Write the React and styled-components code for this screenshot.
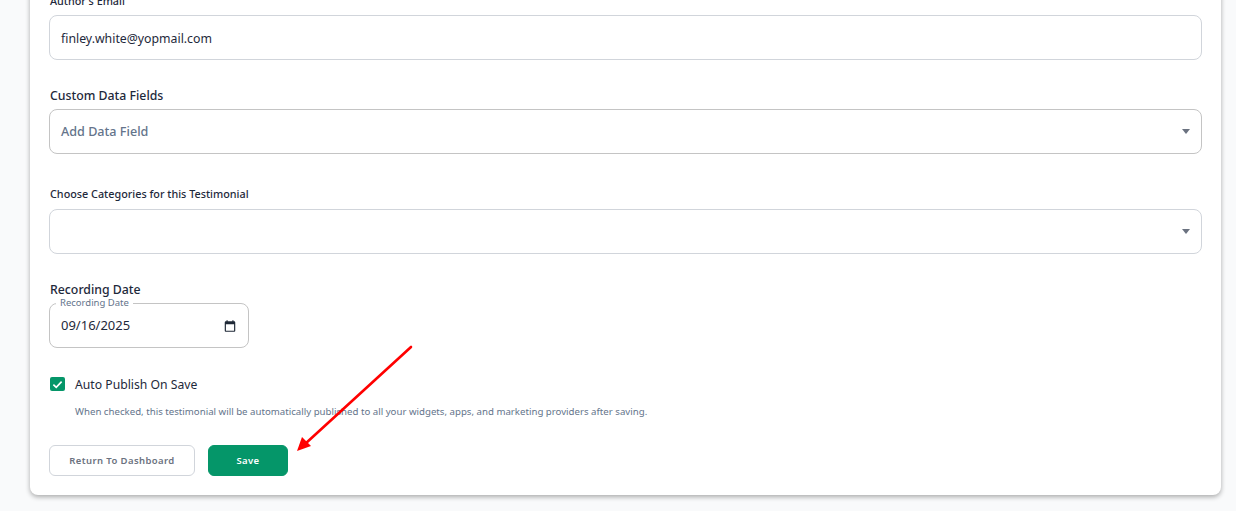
import React from "react";
import styled, { createGlobalStyle } from "styled-components";

const Global = createGlobalStyle`
  html, body { margin: 0; padding: 0; height: 511px; overflow: hidden; background: #f9fafb; }
  * { box-sizing: border-box; }
  #root { height: 511px; overflow: hidden; font-family: "Noto Sans", sans-serif; }
`;

const Page = styled.div`
  position: relative;
  height: 511px;
  padding: 0 15px 0 30px;
  overflow: hidden;
`;

const Card = styled.section`
  margin-top: -40px;
  height: 535px;
  background: #fff;
  border-radius: 8px;
  box-shadow: 0 2px 5px rgba(0, 0, 0, 0.32);
  padding: 32px 19px 0 19px;
  display: flex;
  flex-direction: column;
`;

const Label = styled.div`
  font-size: ${(p) => p.$size || 12.3}px;
  font-weight: ${(p) => p.$weight || 500};
  line-height: 18px;
  color: #1e293b;
  padding-left: 1px;
  margin-top: ${(p) => p.$top || 0}px;
  margin-bottom: ${(p) => p.$bottom || 0}px;
`;

const Field = styled.div`
  height: 45px;
  width: ${(p) => p.$width || "100%"};
  border: 1px solid ${(p) => p.$border || "#d1d5db"};
  border-radius: 8px;
  padding: ${(p) => p.$shift || "0"} 11px 0;
  display: flex;
  align-items: center;
  justify-content: space-between;
  font-size: ${(p) => p.$size || 12.3}px;
  position: relative;
  color: ${(p) => p.$color || "#1e293b"};
  font-weight: ${(p) => p.$weight || 400};
  background: #fff;
`;

const Caret = styled.span`
  width: 0;
  height: 0;
  border-left: 4.5px solid transparent;
  border-right: 4.5px solid transparent;
  border-top: 5px solid #6b7280;
  margin-right: 0;
`;

const Legend = styled.span`
  position: absolute;
  top: -7px;
  left: 6px;
  padding: 0 4px;
  background: #fff;
  font-size: 9.5px;
  line-height: 12px;
  color: #64748b;
`;

const DateText = styled.span`
  margin-top: -2px;
`;

const CheckRow = styled.div`
  display: flex;
  align-items: center;
  gap: 10px;
  margin: 28px 0 0 1px;
  height: 16px;
  font-size: 12.2px;
  color: #1e293b;
`;

const Box = styled.span`
  width: 15px;
  height: 14px;
  border-radius: 2px;
  background: #059669;
  display: flex;
  align-items: center;
  justify-content: center;
`;

const Help = styled.p`
  margin: 12px 0 0 26px;
  font-size: 9.67px;
  line-height: 16px;
  color: #64748b;
`;

const Actions = styled.div`
  display: flex;
  gap: 13px;
  margin-top: 25px;
`;

const Button = styled.button`
  height: 31px;
  width: ${(p) => p.$width}px;
  border-radius: 6px;
  font: 600 9.5px "Noto Sans", sans-serif;
  letter-spacing: 0.4px;
  border: 1px solid ${(p) => (p.$primary ? "#059669" : "#d1d5db")};
  background: ${(p) => (p.$primary ? "#059669" : "#fff")};
  color: ${(p) => (p.$primary ? "#fff" : "#6b7280")};
  padding: 0;
`;

const Arrow = styled.svg`
  position: absolute;
  left: 0;
  top: 0;
  pointer-events: none;
`;

export default function App() {
  return (
    <Page>
      <Global />
      <Card>
        <Label $size={10.8} $bottom={5}>Author's Email</Label>
        <Field $shift="2px">finley.white@yopmail.com</Field>
        <Label $top={27} $bottom={4}>Custom Data Fields</Label>
        <Field $border="#c4c4c4" $color="#64748b" $weight={500} $size={12.6}>
          Add Data Field
          <Caret />
        </Field>
        <Label $size={10.8} $top={31} $bottom={6}>Choose Categories for this Testimonial</Label>
        <Field>
          <span />
          <Caret />
        </Field>
        <Label $top={27} $bottom={4}>Recording Date</Label>
        <Field $width="200px" $border="#c4c4c4" $size={13}>
          <Legend>Recording Date</Legend>
          <DateText>09/16/2025</DateText>
          <svg width="14" height="14" viewBox="0 0 24 24" fill="#1f2937">
            <path d="M19 4h-1V2h-2v2H8V2H6v2H5c-1.1 0-2 .9-2 2v14c0 1.1.9 2 2 2h14c1.1 0 2-.9 2-2V6c0-1.1-.9-2-2-2zm0 16H5V9h14v11z" />
          </svg>
        </Field>
        <CheckRow>
          <Box>
            <svg width="11" height="11" viewBox="0 0 12 12" fill="none" stroke="#fff" strokeWidth="1.8">
              <path d="M1.5 6.2 4.6 9.2 10.5 2.8" />
            </svg>
          </Box>
          Auto Publish On Save
        </CheckRow>
        <Help>When checked, this testimonial will be automatically published to all your widgets, apps, and marketing providers after saving.</Help>
        <Actions>
          <Button $width={146}>Return To Dashboard</Button>
          <Button $width={80} $primary>Save</Button>
        </Actions>
      </Card>
      <Arrow width="1236" height="511" viewBox="0 0 1236 511">
        <line x1="411" y1="347" x2="305" y2="444" stroke="#ff0000" strokeWidth="2.6" strokeLinecap="round" />
        <polygon points="297,451 302,437 311,446" fill="#ff0000" />
      </Arrow>
    </Page>
  );
}
